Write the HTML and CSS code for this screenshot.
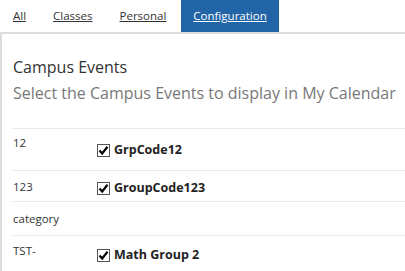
FILE: index.html
```html
<!DOCTYPE html>
<html>
<head>
<meta charset="utf-8">
<title>Configuration</title>
<link rel="stylesheet" href="styles.css">
</head>
<body>
	<ul class="tabs">
		<li><a href="#">All</a></li>
		<li><a href="#">Classes</a></li>
		<li><a href="#">Personal</a></li>
		<li class="active"><a href="#">Configuration</a></li>
	</ul>
	<div class="panel">
		<h2 class="title">Campus Events</h2>
		<p class="subtitle">Select the Campus Events to display in My Calendar</p>
		<div class="list">
			<div class="row row1">
				<div class="code">12</div>
				<label class="item"><span class="check"><svg viewBox="0 0 13 13" width="13" height="13"><path d="M2.5 6.5 L5.2 9.5 L10.5 2.8" fill="none" stroke="#000" stroke-width="2.2"/></svg></span>GrpCode12</label>
			</div>
			<div class="row row2">
				<div class="code">123</div>
				<label class="item"><span class="check"><svg viewBox="0 0 13 13" width="13" height="13"><path d="M2.5 6.5 L5.2 9.5 L10.5 2.8" fill="none" stroke="#000" stroke-width="2.2"/></svg></span>GroupCode123</label>
			</div>
			<div class="row row3">
				<div class="code">category</div>
			</div>
			<div class="row row4">
				<div class="code">TST-</div>
				<label class="item"><span class="check"><svg viewBox="0 0 13 13" width="13" height="13"><path d="M2.5 6.5 L5.2 9.5 L10.5 2.8" fill="none" stroke="#000" stroke-width="2.2"/></svg></span>Math Group 2</label>
			</div>
		</div>
	</div>
</body>
</html>
```

FILE: styles.css
```css
*{margin:0; padding:0; list-style:none; box-sizing:border-box;}
body{font-family:"Open Sans", "Liberation Sans", sans-serif; color:#333; background:#fff; width:405px; height:271px; overflow:hidden;}

.tabs{display:flex; height:34px; border-bottom:2px solid #dcdcdc;}
.tabs li{padding:0 14px 0 13px; line-height:32px; font-size:11.5px;}
.tabs li a{color:#333; text-decoration:underline;}
.tabs li.active{margin-left:1px; padding:0 12px; background:#2265a6;}
.tabs li.active a{color:#fff;}

.panel{border-left:2px solid #dcdcdc; padding:0 0 0 11px; height:237px;}
.title{font-size:16px; font-weight:normal; color:#333; line-height:22px; padding-top:22px;}
.subtitle{font-size:16px; color:#787878; line-height:22px; padding-top:4px;}

.list{margin-top:24px;}
.row{display:flex; border-top:1px solid #e8e8e8; font-size:11.5px; line-height:18px;}
.code{width:84px; color:#333;}
.item{display:flex; align-items:center; font-weight:bold; color:#222; font-size:12.5px;}
.check{display:inline-block; width:13px; height:13px; border:1px solid #555; background:#fff; margin-right:4px; position:relative;}
.check svg{position:absolute; left:-1px; top:-1px;}

.row1{height:42px;}
.row1 .code{padding-top:5px;}
.row1 .item{padding-top:12px; align-self:flex-start;}
.row2{height:31px;}
.row2 .code{padding-top:7px;}
.row2 .item{padding-top:8px; align-self:flex-start;}
.row3{height:34px;}
.row3 .code{padding-top:8px;}
.row4 .code{padding-top:6px;}
.row4 .item{padding-top:10px; align-self:flex-start;}
```
